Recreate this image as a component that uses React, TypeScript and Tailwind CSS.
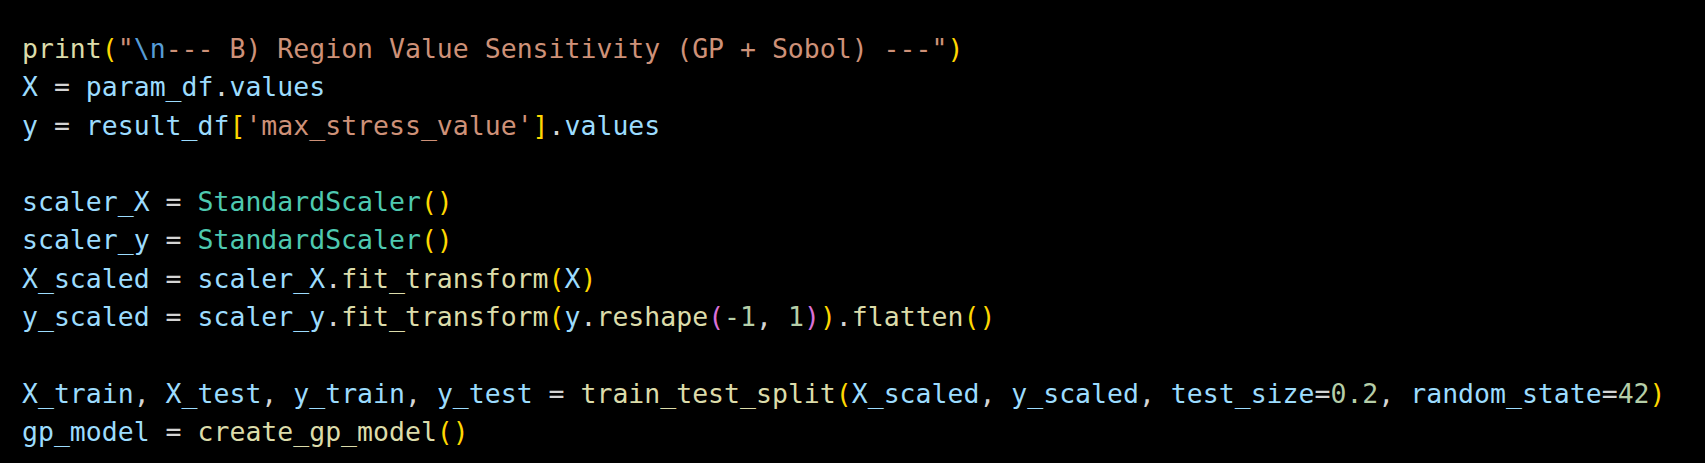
import React from "react";

type Tok = [string, string];

const F = "text-[#DCDCAA]"; // function
const S = "text-[#CE9178]"; // string
const V = "text-[#9CDCFE]"; // variable
const C = "text-[#4EC9B0]"; // class
const B = "text-[#FFD700]"; // bracket gold
const P = "text-[#DA70D6]"; // bracket pink
const N = "text-[#B5CEA8]"; // number
const O = "text-[#D4D4D4]"; // operator/punct
const E = "text-[#569CD6]"; // escape

const lines: Tok[][] = [
  [[F, "print"], [B, "("], [S, "\""], [E, "\\n"], [S, "--- B) Region Value Sensitivity (GP + Sobol) ---\""], [B, ")"]],
  [[V, "X"], [O, " = "], [V, "param_df"], [O, "."], [V, "values"]],
  [[V, "y"], [O, " = "], [V, "result_df"], [B, "["], [S, "'max_stress_value'"], [B, "]"], [O, "."], [V, "values"]],
  [],
  [[V, "scaler_X"], [O, " = "], [C, "StandardScaler"], [B, "()"]],
  [[V, "scaler_y"], [O, " = "], [C, "StandardScaler"], [B, "()"]],
  [[V, "X_scaled"], [O, " = "], [V, "scaler_X"], [O, "."], [F, "fit_transform"], [B, "("], [V, "X"], [B, ")"]],
  [[V, "y_scaled"], [O, " = "], [V, "scaler_y"], [O, "."], [F, "fit_transform"], [B, "("], [V, "y"], [O, "."], [F, "reshape"], [P, "("], [N, "-1"], [O, ", "], [N, "1"], [P, ")"], [B, ")"], [O, "."], [F, "flatten"], [B, "()"]],
  [],
  [[V, "X_train"], [O, ", "], [V, "X_test"], [O, ", "], [V, "y_train"], [O, ", "], [V, "y_test"], [O, " = "], [F, "train_test_split"], [B, "("], [V, "X_scaled"], [O, ", "], [V, "y_scaled"], [O, ", "], [V, "test_size"], [O, "="], [N, "0.2"], [O, ", "], [V, "random_state"], [O, "="], [N, "42"], [B, ")"]],
  [[V, "gp_model"], [O, " = "], [F, "create_gp_model"], [B, "()"]],
];

export default function App() {
  return (
    <div className="w-[1705px] h-[463px] bg-black overflow-hidden pt-[30px] pl-[22px]">
      <div
        className="text-[26.5px] leading-[38.3px] whitespace-pre"
        style={{ fontFamily: '"DejaVu Sans Mono", "Liberation Mono", monospace' }}
      >
        {lines.map((ln, i) => (
          <div key={i} className="h-[38.3px]">
            {ln.map(([cls, t], j) => (
              <span key={j} className={cls}>
                {t}
              </span>
            ))}
          </div>
        ))}
      </div>
    </div>
  );
}
